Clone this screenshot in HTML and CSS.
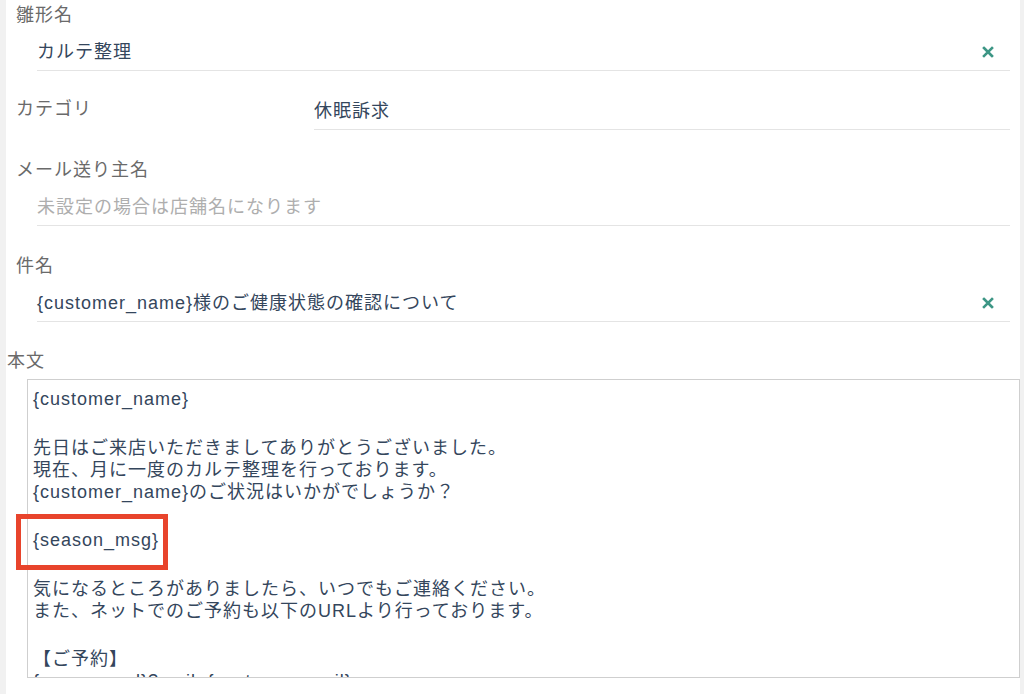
FILE: index.html
```html
<!DOCTYPE html>
<html lang="ja">
<head>
<meta charset="utf-8">
<title>雛形編集</title>
<link rel="stylesheet" href="styles.css">
</head>
<body>
<div class="panel">
  <div class="field">
    <div class="label">雛形名</div>
    <div class="input-row">
      <span class="value">カルテ整理</span>
      <svg class="clear" viewBox="0 0 12 12" width="12" height="12"><path d="M2 2L10 10M10 2L2 10" stroke="#3d9685" stroke-width="2.6" stroke-linecap="square"/></svg>
    </div>
  </div>
  <div class="field field-inline">
    <div class="label label-inline">カテゴリ</div>
    <div class="input-row select-row">
      <span class="value">休眠訴求</span>
    </div>
  </div>
  <div class="field">
    <div class="label">メール送り主名</div>
    <div class="input-row">
      <span class="placeholder">未設定の場合は店舗名になります</span>
    </div>
  </div>
  <div class="field">
    <div class="label">件名</div>
    <div class="input-row">
      <span class="value">{customer_name}様のご健康状態の確認について</span>
      <svg class="clear" viewBox="0 0 12 12" width="12" height="12"><path d="M2 2L10 10M10 2L2 10" stroke="#3d9685" stroke-width="2.6" stroke-linecap="square"/></svg>
    </div>
  </div>
  <div class="body-field">
    <div class="label body-label">本文</div>
    <div class="textarea">
      <div class="ln">{customer_name}</div>
      <div class="gap"></div>
      <div class="ln">先日はご来店いただきましてありがとうございました。</div>
      <div class="ln">現在、月に一度のカルテ整理を行っております。</div>
      <div class="ln">{customer_name}のご状況はいかがでしょうか？</div>
      <div class="gap"></div>
      <div class="ln">{season_msg}</div>
      <div class="gap"></div>
      <div class="ln">気になるところがありましたら、いつでもご連絡ください。</div>
      <div class="ln">また、ネットでのご予約も以下のURLより行っております。</div>
      <div class="gap"></div>
      <div class="ln">【ご予約】</div>
      <div class="ln">{reserve_url}?mail={customer_mail}</div>
    </div>
  </div>
</div>
<div class="highlight"></div>
</body>
</html>
```

FILE: styles.css
```css
html, body {
  margin: 0;
  padding: 0;
}
body {
  background: #f1f1f1;
  font-family: "Liberation Sans", "Noto Sans CJK JP", sans-serif;
  font-size: 18px;
  letter-spacing: 1px;
  position: relative;
  height: 694px;
  overflow: hidden;
}
.panel {
  margin-left: 6px;
  width: 1014px;
  height: 694px;
  background: #fff;
  padding-top: 3px;
  box-sizing: border-box;
}
.field {
  padding-left: 10px;
  margin-bottom: 28px;
}
.label {
  color: #6a6a6a;
  line-height: 24px;
}
.input-row {
  margin-left: 21px;
  margin-top: 6px;
  width: 973px;
  height: 33px;
  padding-bottom: 4px;
  border-bottom: 1px solid #e4e4e4;
  display: flex;
  align-items: center;
  justify-content: space-between;
}
.value {
  color: #34465c;
}
.placeholder {
  color: #aeaeae;
}
.clear {
  margin-right: 16px;
  margin-top: 4px;
  flex: none;
}
.field-inline {
  display: flex;
  align-items: flex-start;
  margin-top: -6px;
}
.label-inline {
  width: 298px;
  flex: none;
  margin-top: 4px;
}
.select-row {
  margin-left: 0;
  margin-top: 0;
  width: 696px;
  height: 32px;
}
.body-field {
  margin-top: -1px;
}
.body-label {
  padding-left: 1px;
}
.textarea {
  margin-left: 21px;
  margin-top: 6px;
  width: 993px;
  height: 299px;
  box-sizing: border-box;
  border: 1px solid #cfcfcf;
  padding: 8px 4px 0 5px;
  overflow: hidden;
  color: #34465c;
}
.ln {
  line-height: 22px;
  white-space: nowrap;
}
.gap {
  height: 26.5px;
}
.highlight {
  position: absolute;
  left: 16px;
  top: 514px;
  width: 152px;
  height: 56px;
  box-sizing: border-box;
  border: 5px solid #e8442c;
}
```
